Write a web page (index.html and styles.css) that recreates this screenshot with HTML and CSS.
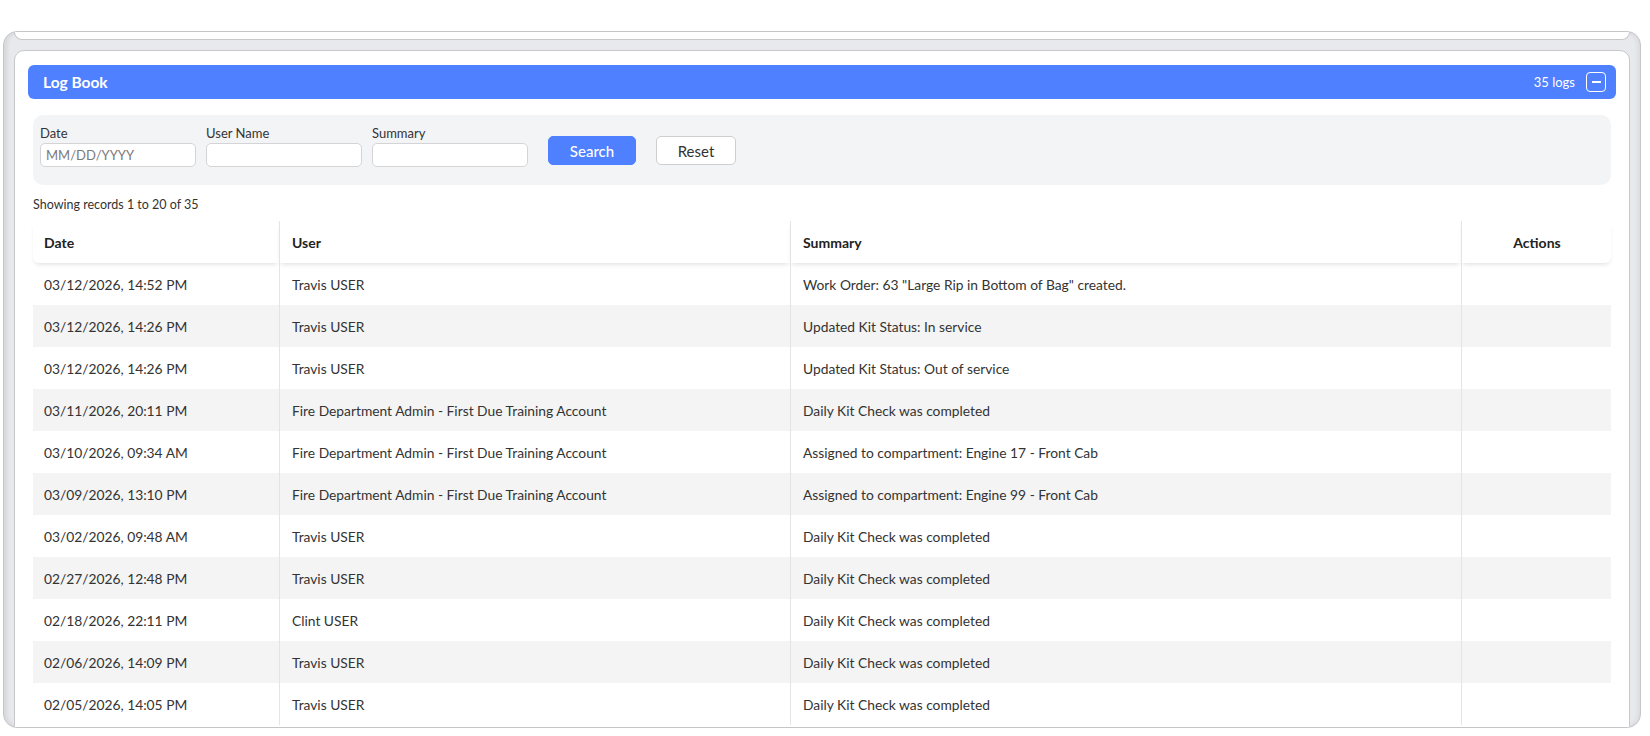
FILE: index.html
```html
<!DOCTYPE html>
<html lang="en">
	<head>
		<meta charset="UTF-8">
		<title>Log Book</title>
		<link rel="stylesheet" href="styles.css">
	</head>
	<body>

		<div class="frame">
			<!-- bottom of the card above, scrolled out of view -->
			<div class="card-prev"></div>

			<div class="card">
				<div class="panel-head">
					<span class="panel-title">Log Book</span>
					<span class="panel-count">35 logs</span>
					<button class="collapse-btn" type="button" aria-label="Collapse"><span></span></button>
				</div>

				<form class="filters">
					<label class="field">
						<span>Date</span>
						<input type="text" placeholder="MM/DD/YYYY">
					</label>
					<label class="field">
						<span>User Name</span>
						<input type="text">
					</label>
					<label class="field">
						<span>Summary</span>
						<input type="text">
					</label>
					<button class="btn btn-primary" type="button">Search</button>
					<button class="btn" type="button">Reset</button>
				</form>

				<p class="records-info">Showing records 1 to 20 of 35</p>

				<table class="log-table">
					<colgroup>
						<col class="col-date">
						<col class="col-user">
						<col class="col-summary">
						<col class="col-actions">
					</colgroup>
					<thead>
						<tr>
							<th>Date</th>
							<th>User</th>
							<th>Summary</th>
							<th class="actions">Actions</th>
						</tr>
					</thead>
					<tbody>
						<tr><td>03/12/2026, 14:52 PM</td><td>Travis USER</td><td>Work Order: 63 "Large Rip in Bottom of Bag" created.</td><td></td></tr>
						<tr><td>03/12/2026, 14:26 PM</td><td>Travis USER</td><td>Updated Kit Status: In service</td><td></td></tr>
						<tr><td>03/12/2026, 14:26 PM</td><td>Travis USER</td><td>Updated Kit Status: Out of service</td><td></td></tr>
						<tr><td>03/11/2026, 20:11 PM</td><td>Fire Department Admin - First Due Training Account</td><td>Daily Kit Check was completed</td><td></td></tr>
						<tr><td>03/10/2026, 09:34 AM</td><td>Fire Department Admin - First Due Training Account</td><td>Assigned to compartment: Engine 17 - Front Cab</td><td></td></tr>
						<tr><td>03/09/2026, 13:10 PM</td><td>Fire Department Admin - First Due Training Account</td><td>Assigned to compartment: Engine 99 - Front Cab</td><td></td></tr>
						<tr><td>03/02/2026, 09:48 AM</td><td>Travis USER</td><td>Daily Kit Check was completed</td><td></td></tr>
						<tr><td>02/27/2026, 12:48 PM</td><td>Travis USER</td><td>Daily Kit Check was completed</td><td></td></tr>
						<tr><td>02/18/2026, 22:11 PM</td><td>Clint USER</td><td>Daily Kit Check was completed</td><td></td></tr>
						<tr><td>02/06/2026, 14:09 PM</td><td>Travis USER</td><td>Daily Kit Check was completed</td><td></td></tr>
						<tr><td>02/05/2026, 14:05 PM</td><td>Travis USER</td><td>Daily Kit Check was completed</td><td></td></tr>
					</tbody>
				</table>
			</div>
		</div>

	</body>
</html>
```

FILE: styles.css
```css
/* all */
* {
	box-sizing: border-box;
}

body {
	margin: 0;
	padding: 31px 9px 8px 3px;
	background: #fff;
	font-family: Lato, "Open Sans", sans-serif;
	color: #333;
}

/* grey scroll area around the cards */
.frame {
	height: 697px;
	overflow: hidden;
	padding: 0 10px;
	background: #e8e9ed;
	border: 1px solid #c6c6c8;
	border-radius: 14px;
	box-shadow: inset 3px 0 4px rgba(0, 0, 0, 0.08), inset -3px 0 4px rgba(0, 0, 0, 0.05);
}

.card-prev {
	height: 8px;
	background: #fff;
	border: 1px solid #c8c8ca;
	border-top: none;
	border-radius: 0 0 10px 10px;
}

.card {
	margin-top: 10px;
	padding: 14px 13px;
	background: #fff;
	border: 1px solid #c8c8ca;
	border-radius: 10px 10px 0 0;
}

/* blue title bar */
.panel-head {
	display: flex;
	align-items: center;
	height: 34px;
	padding: 0 10px 0 15px;
	background: #4f80ff;
	border-radius: 6px;
	color: #fff;
}

.panel-title {
	flex: 1;
	font-size: 15.5px;
	font-weight: 700;
}

.panel-count {
	font-size: 13px;
	margin-right: 11px;
}

.collapse-btn {
	display: flex;
	align-items: center;
	justify-content: center;
	width: 20px;
	height: 20px;
	padding: 0;
	background: transparent;
	border: 1px solid #fff;
	border-radius: 4px;
}

.collapse-btn span {
	width: 9px;
	height: 2px;
	background: #fff;
}

/* search form */
.filters {
	display: flex;
	align-items: flex-end;
	gap: 10px;
	height: 70px;
	margin: 16px 5px 0;
	padding: 8px 7px 18px;
	background: #f3f4f6;
	border-radius: 10px;
}

.field {
	display: flex;
	flex-direction: column;
	font-size: 13px;
	color: #333;
}

.field span {
	line-height: 16px;
	margin-bottom: 2px;
}

.field input {
	width: 156px;
	height: 24px;
	padding: 0 5px;
	font-family: inherit;
	font-size: 13px;
	color: #333;
	background: #fff;
	border: 1px solid #d4d4d6;
	border-radius: 5px;
	outline: none;
}

.field input::placeholder {
	color: #7a7a7a;
}

.btn {
	height: 29px;
	width: 80px;
	margin-bottom: 2px;
	margin-left: 10px;
	font-family: inherit;
	font-size: 15px;
	color: #333;
	background: #fff;
	border: 1px solid #cfcfd1;
	border-radius: 5px;
}

.btn-primary {
	width: 88px;
	font-weight: 500;
	color: #fff;
	background: #4f80ff;
	border-color: #4f80ff;
}

.records-info {
	margin: 12px 5px 8px;
	font-size: 12.5px;
	line-height: 16px;
	color: #333;
}

/* table */
.log-table {
	width: calc(100% - 10px);
	margin: 0 5px;
	border-collapse: separate;
	border-spacing: 0;
	table-layout: fixed;
	font-size: 13.8px;
	color: #333;
}

.col-date { width: 246px; }
.col-user { width: 511px; }
.col-summary { width: 671px; }
.col-actions { width: 150px; }

.log-table th {
	height: 42px;
	padding: 0 11px;
	text-align: left;
	font-size: 14px;
	font-weight: 700;
	color: #222;
	background: #fff;
	box-shadow: 0 3px 5px -2px rgba(0, 0, 0, 0.14);
}

.log-table th:first-child {
	border-radius: 6px 0 0 6px;
}

.log-table th.actions {
	text-align: center;
	border-radius: 0 6px 6px 0;
}

.log-table td {
	height: 42px;
	padding: 0 11px;
}

.log-table th + th,
.log-table td + td {
	border-left: 1px solid #e4e4e4;
	padding-left: 12px;
}

.log-table tbody tr:nth-child(even) td {
	background: #f4f4f4;
}
```
